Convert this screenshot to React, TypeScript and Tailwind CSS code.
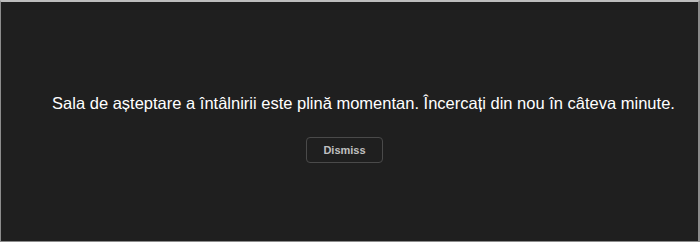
export default function App() {
  return (
    <div className="h-[242px] w-[700px] overflow-hidden bg-[#1f1f1f] border-t-2 border-t-[#bdbdbd] border-l border-l-[#8c8c8c] border-r-2 border-r-[#8c8c8c] border-b border-b-[#8c8c8c] font-['Liberation_Sans',Arial,sans-serif]">
      <div className="flex flex-col items-center pt-[91px]">
        <p className="ml-[28px] text-[16.5px] leading-[20px] text-white whitespace-nowrap">
          Sala de așteptare a întâlnirii este plină momentan. Încercați din nou în câteva minute.
        </p>
        <button
          type="button"
          className="mt-[24px] -ml-[10px] h-[26px] w-[77px] rounded-[4px] border border-[#4a4a4a] text-[11px] font-bold text-[#c0c0c0]"
        >
          Dismiss
        </button>
      </div>
    </div>
  );
}
